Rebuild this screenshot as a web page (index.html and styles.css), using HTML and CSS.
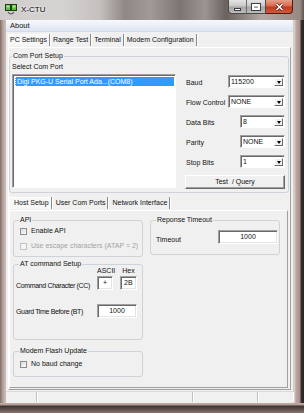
FILE: index.html
```html
<!DOCTYPE html>
<html lang="en">
<head>
    <meta charset="UTF-8">
    <meta name="viewport" content="width=device-width, initial-scale=1.0">
    <title>X-CTU</title>
    <link rel="stylesheet" href="styles.css">
</head>
<body>
<div class="window">
    <div class="titlebar">
        <svg class="app-icon" width="12" height="12" viewBox="0 0 12 12">
            <rect x="0.5" y="0.5" width="5" height="6" fill="#5fbf3a" stroke="#1f3d14"/>
            <rect x="6.5" y="0.5" width="5" height="6" fill="#5fbf3a" stroke="#1f3d14"/>
            <rect x="1.5" y="1.5" width="3" height="2" fill="#a6e88a"/>
            <rect x="7.5" y="1.5" width="3" height="2" fill="#a6e88a"/>
            <path d="M3 8 Q6 12 9 8" fill="none" stroke="#555" stroke-width="1.2"/>
        </svg>
        <span class="title">X-CTU</span>
        <div class="caption">
            <div class="cap-group">
                <span class="cap-btn min"><span class="min-bar"></span></span>
                <span class="cap-btn max"><span class="max-box"></span></span>
            </div>
            <span class="cap-btn close">
                <svg width="9" height="8" viewBox="0 0 9 8">
                    <path d="M1.5 1 L7.5 7 M7.5 1 L1.5 7" stroke="#4a1a10" stroke-width="3"/>
                    <path d="M1.5 1 L7.5 7 M7.5 1 L1.5 7" stroke="#fff" stroke-width="1.6"/>
                </svg>
            </span>
        </div>
    </div>

    <div class="client">
        <div class="menubar"><span>About</span></div>

        <div class="tabs main-tabs">
            <span class="tab active">PC Settings</span>
            <span class="tab">Range Test</span>
            <span class="tab">Terminal</span>
            <span class="tab">Modem Configuration</span>
        </div>

        <div class="tabpanel outer">
            <fieldset class="group comport">
                <legend>Com Port Setup</legend>
                <div class="comport-body">
                    <div class="port-list">
                        <div class="caption-label">Select Com Port</div>
                        <div class="listbox">
                            <div class="list-item selected">Digi PKG-U Serial Port Ada...(COM8)</div>
                        </div>
                    </div>
                    <div class="port-settings">
                        <div class="setting">
                            <span>Baud</span>
                            <div class="combo wide"><span class="val">115200</span><span class="drop"></span></div>
                        </div>
                        <div class="setting">
                            <span>Flow Control</span>
                            <div class="combo wide"><span class="val">NONE</span><span class="drop"></span></div>
                        </div>
                        <div class="setting">
                            <span>Data Bits</span>
                            <div class="combo narrow"><span class="val">8</span><span class="drop"></span></div>
                        </div>
                        <div class="setting">
                            <span>Parity</span>
                            <div class="combo narrow"><span class="val">NONE</span><span class="drop"></span></div>
                        </div>
                        <div class="setting">
                            <span>Stop Bits</span>
                            <div class="combo narrow"><span class="val">1</span><span class="drop"></span></div>
                        </div>
                        <div class="button">Test &nbsp;/ Query</div>
                    </div>
                </div>
            </fieldset>

            <div class="tabs inner-tabs">
                <span class="tab active">Host Setup</span>
                <span class="tab">User Com Ports</span>
                <span class="tab">Network Interface</span>
            </div>

            <div class="tabpanel inner">
                <div class="host-left">
                    <fieldset class="group api">
                        <legend>API</legend>
                        <div class="check-row"><span class="checkbox"></span>Enable API</div>
                        <div class="check-row disabled"><span class="checkbox"></span>Use escape characters (ATAP = 2)</div>
                    </fieldset>

                    <fieldset class="group at-setup">
                        <legend>AT command Setup</legend>
                        <div class="at-grid">
                            <span></span>
                            <span class="col-head">ASCII</span>
                            <span class="col-head hex-head">Hex</span>
                            <span class="at-label">Command Character (CC)</span>
                            <div class="field center">+</div>
                            <div class="field left hex-field">2B</div>
                            <span class="at-label guard">Guard Time Before (BT)</span>
                            <div class="field center guard span2">1000</div>
                        </div>
                    </fieldset>

                    <fieldset class="group flash">
                        <legend>Modem Flash Update</legend>
                        <div class="check-row"><span class="checkbox"></span>No baud change</div>
                    </fieldset>
                </div>

                <div class="host-right">
                    <fieldset class="group timeout">
                        <legend>Reponse Timeout</legend>
                        <div class="timeout-row">
                            <span class="timeout-label">Timeout</span>
                            <div class="field center timeout-field">1000</div>
                        </div>
                    </fieldset>
                </div>
            </div>
        </div>

        <div class="statusbar">
            <span class="status-cell s1"></span>
            <span class="status-cell s2"></span>
            <span class="status-cell s3"></span>
            <span class="status-cell s4"></span>
        </div>
    </div>
</div>
</body>
</html>
```

FILE: styles.css
```css
* {
    box-sizing: border-box;
}
body {
    margin: 0;
    font-family: "Liberation Sans", Arial, sans-serif;
    font-size: 7px;
    line-height: 8px;
    color: #111;
}
.window {
    width: 304px;
    height: 413px;
    overflow: hidden;
    display: flex;
    flex-direction: column;
    background:
        linear-gradient(to bottom, transparent 403px, #c2aca6 403px, #b19a94 405px, #3d3533 406px, #5a4c48 409px, #8a7670 413px),
        linear-gradient(to right, #7d6c67 0, #a8948e 2px, #c9bab6 5px, #c9bab6 293px, #e2d8d5 294px, #bea7a1 296px, #a88f89 300px, #3a3333 301px, #262222 304px);
}

/* title bar */
.titlebar {
    height: 20px;
    display: flex;
    align-items: flex-start;
    background: linear-gradient(to right, #cfcccb 0, #d6d4d3 60px, #c4c0be 100px, #8f8783 125px, #a29a96 150px, #7d7571 180px, #9d9591 205px, #6a625e 226px, #b3a8a4 262px, #978984 300px, #5d5350 304px);
}
.app-icon {
    margin: 4px 0 0 5px;
}
.title {
    margin: 5px 0 0 4px;
    font-size: 8px;
    line-height: 10px;
    color: #000;
    text-shadow: 0 0 3px #fff, 0 0 2px #fff;
}
.caption {
    display: flex;
    margin-left: auto;
    margin-right: 11px;
    height: 14px;
}
.cap-group {
    display: flex;
    border: 1px solid #4e4a48;
    border-top: none;
    border-radius: 0 0 0 4px;
    background: linear-gradient(#e4e4e4, #c9c9c9 45%, #a6a6a6 55%, #bcbcbc);
}
.cap-btn {
    display: flex;
    align-items: center;
    justify-content: center;
}
.cap-btn.min, .cap-btn.max {
    width: 18px;
}
.cap-btn.min {
    border-right: 1px solid #6d6a68;
}
.min-bar {
    width: 7px;
    height: 3px;
    margin-top: 5px;
    background: #fff;
    border: 1px solid #3e3e3e;
}
.max-box {
    width: 8px;
    height: 6px;
    border: 2px solid #fff;
    outline: 1px solid #3e3e3e;
}
.cap-btn.close {
    width: 27px;
    border: 1px solid #4d1d13;
    border-top: none;
    border-left: none;
    border-radius: 0 0 4px 0;
    background: linear-gradient(#e6a08a, #d66a50 45%, #c23a1c 55%, #d4593b);
}

/* client area */
.client {
    margin-left: 6px;
    width: 287px;
    height: 383px;
    background: #f0f0f0;
    display: flex;
    flex-direction: column;
}
.menubar {
    height: 12px;
    padding-left: 4px;
    line-height: 12px;
    font-size: 7.5px;
    background: linear-gradient(#f6f8fc, #dde5f3);
    border-bottom: 1px solid #d3dbe8;
}

/* tabs */
.tabs {
    display: flex;
    height: 14px;
    align-items: center;
}
.tab {
    height: 12px;
    line-height: 12px;
    padding: 0 2px;
    border-right: 1px solid #8a8a8a;
    box-shadow: 1px 0 0 #fff;
    margin-right: 1px;
    white-space: nowrap;
}
.tab.active {
    background: #f7f7f7;
    box-shadow: inset 1px 1px 0 #fff, 1px 0 0 #fff;
}
.main-tabs {
    margin: 1px 0 0 2px;
}
.inner-tabs {
    margin-top: 3px;
}
.inner-tabs .tab {
    padding: 0 2px 0 3px;
}
.inner-tabs .tab:first-child {
    padding-left: 5px;
}

.tabpanel {
    border: 1px solid;
    border-color: #fff #a0a0a0 #a0a0a0 #fff;
}
.outer {
    flex: 1;
    margin: 0 2px;
    padding: 4px 1px 1px 0;
    display: flex;
    flex-direction: column;
}
.inner {
    flex: 1;
    margin-right: 1px;
    padding: 5px 3px;
    display: grid;
    grid-template-columns: 130px 130px;
    column-gap: 7px;
    align-items: start;
}

/* group boxes */
.group {
    margin: 0;
    padding: 0 2px;
    border: 1px solid #cdd3d8;
    border-radius: 3px;
    min-width: 0;
}
.group legend {
    padding: 0 1px;
    line-height: 8px;
}

.comport {
    padding: 3px 2px 3px 2px;
}
.comport-body {
    display: flex;
    column-gap: 9px;
}
.port-list {
    width: 164px;
}
.caption-label {
    height: 8px;
    margin-bottom: 3px;
}
.listbox {
    height: 114px;
    background: #fff;
    border: 1px solid;
    border-color: #a0a0a0 #fff #fff #a0a0a0;
    box-shadow: inset 1px 1px 0 #696969;
    padding: 2px 1px 0 2px;
}
.list-item {
    height: 9px;
    line-height: 9px;
    padding-left: 1px;
    white-space: nowrap;
}
.list-item.selected {
    background: #3399ff;
    color: #fff;
    border-left: 1px dotted #ffffff;
}

.port-settings {
    width: 100px;
    margin-top: 12px;
    display: flex;
    flex-direction: column;
    row-gap: 7px;
}
.setting {
    display: flex;
    align-items: center;
    justify-content: space-between;
    height: 13px;
    padding-left: 1px;
}
.setting > span {
    padding-top: 2px;
}
.combo {
    display: flex;
    height: 13px;
    background: #fff;
    border: 1px solid;
    border-color: #a0a0a0 #fff #fff #a0a0a0;
    box-shadow: inset 1px 1px 0 #696969;
}
.combo.wide {
    width: 57px;
}
.combo.narrow {
    width: 45px;
}
.combo .val {
    flex: 1;
    padding: 1px 0 0 2px;
    line-height: 10px;
}
.combo .drop {
    width: 9px;
    margin: 2px 1px 1px 0;
    background: #f0f0f0;
    border: 1px solid;
    border-color: #fff #696969 #696969 #fff;
    display: flex;
    align-items: center;
    justify-content: center;
}
.combo .drop::after {
    content: "";
    border-left: 2.5px solid transparent;
    border-right: 2.5px solid transparent;
    border-top: 3px solid #000;
}
.button {
    height: 14px;
    line-height: 12px;
    text-align: center;
    background: #f0f0f0;
    border: 1px solid;
    border-color: #fff #696969 #696969 #fff;
    box-shadow: inset -1px -1px 0 #a0a0a0;
}

/* host setup */
.host-left {
    display: flex;
    flex-direction: column;
}
.group.api legend,
.group.at-setup legend,
.group.flash legend,
.group.timeout legend {
    margin-left: 3px;
}
.api {
    padding: 3px 2px 6px 2px;
    display: flex;
    flex-direction: column;
    row-gap: 7px;
}
.check-row {
    display: flex;
    align-items: center;
    height: 8px;
    padding-left: 4px;
    column-gap: 4px;
    white-space: nowrap;
}
.checkbox {
    flex: none;
    width: 7px;
    height: 7px;
    border: 1px solid #8e8f8f;
    background: linear-gradient(135deg, #dcdcdc, #fbfbfb);
}
.check-row.disabled {
    color: #a3a3a3;
}
.check-row.disabled .checkbox {
    border-color: #c4c4c4;
    background: #f4f4f4;
}

.at-setup {
    margin-top: 3px;
    padding: 0 2px 21px 2px;
}
.at-grid {
    display: grid;
    grid-template-columns: 81px 16px 24px;
    grid-template-rows: 8px 14px 27px;
    row-gap: 1px;
    align-items: center;
    margin-top: -1px;
}
.at-label {
    white-space: nowrap;
    letter-spacing: -0.35px;
    padding-top: 5px;
}
.col-head {
    text-align: center;
}
.hex-head {
    padding-left: 7px;
}
.hex-field {
    margin-left: 7px;
}
.at-label.guard, .field.guard {
    align-self: end;
}
.at-label.guard {
    line-height: 14px;
    padding-top: 0;
    margin-bottom: -1px;
}
.field.span2 {
    grid-column: 2 / 4;
}
.field {
    height: 14px;
    line-height: 12px;
    background: #fff;
    border: 1px solid;
    border-color: #a0a0a0 #fff #fff #a0a0a0;
    box-shadow: inset 1px 1px 0 #696969, inset -1px -1px 0 #e3e3e3;
}
.field.center {
    text-align: center;
}
.field.left {
    padding-left: 3px;
}

.flash {
    margin-top: 7px;
    padding: 5px 2px 8px 2px;
}

.timeout {
    padding: 6px 1px 10px 2px;
}
.timeout-row {
    display: flex;
    align-items: center;
    justify-content: space-between;
    padding-left: 3px;
}
.timeout-label {
    padding-top: 5px;
}
.timeout-field {
    width: 60px;
}

/* status bar */
.statusbar {
    margin: 1px 0 1px 0;
    height: 11px;
    display: flex;
    border-top: 1px solid #dadada;
}
.status-cell {
    border-right: 1px solid #c2c2c2;
    box-shadow: 1px 0 0 #fff;
}
.s1 { width: 31px; }
.s2 { width: 156px; }
.s3 { width: 65px; }
.s4 { flex: 1; border-right: none; }
```
